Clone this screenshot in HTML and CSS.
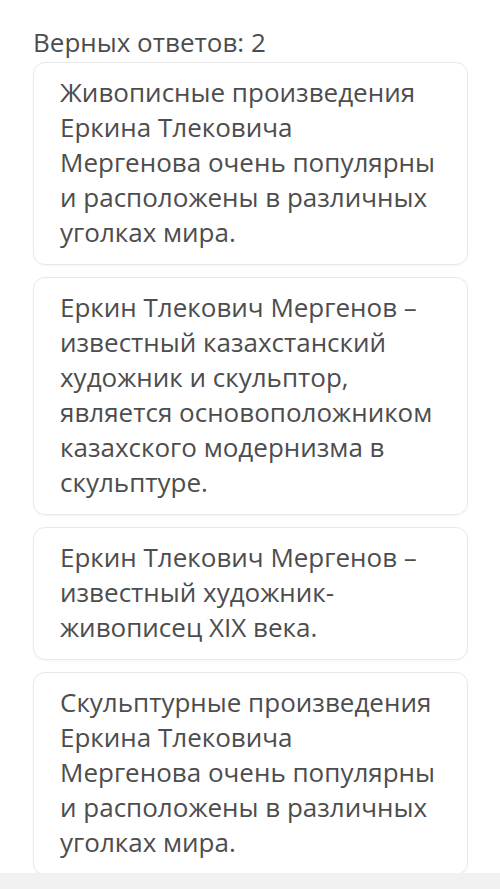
FILE: index.html
```html
<!DOCTYPE html>
<html lang="ru">
<head>
  <meta charset="UTF-8">
  <meta name="viewport" content="width=device-width, initial-scale=1.0">
  <title>Верных ответов</title>
  <link rel="stylesheet" href="styles.css">
</head>
<body>
  <div class="quiz">
    <div class="quiz-title">Верных ответов: 2</div>
    <div class="answers">
      <div class="answer">Живописные произведения Еркина Тлековича Мергенова очень популярны и расположены в различных уголках мира.</div>
      <div class="answer">Еркин Тлекович Мергенов – известный казахстанский художник и скульптор, является основоположником казахского модернизма в скульптуре.</div>
      <div class="answer">Еркин Тлекович Мергенов – известный художник-живописец XIX века.</div>
      <div class="answer">Скульптурные произведения Еркина Тлековича Мергенова очень популярны и расположены в различных уголках мира.</div>
    </div>
  </div>
  <div class="bottom-bar"></div>
</body>
</html>
```

FILE: styles.css
```css
body {
  margin: 0;
  padding: 0;
  background-color: #fff;
  font-family: 'Open Sans', 'Noto Sans', sans-serif;
  color: #4d4d4d;
}

.quiz {
  padding: 25px 32px 0 33px;
}

.quiz-title {
  font-size: 26px;
  line-height: 35px;
  margin-bottom: 2px;
}

.answers {
  display: flex;
  flex-direction: column;
  gap: 12px;
}

.answer {
  border: 1px solid #e8e8e8;
  border-radius: 12px;
  padding: 12px 31px 14px 26px;
  font-size: 26px;
  line-height: 35px;
  box-shadow: 0 1px 2px rgba(0, 0, 0, 0.04);
}

.bottom-bar {
  position: fixed;
  left: 0;
  right: 0;
  bottom: 0;
  height: 16px;
  background-color: #f1f1f1;
}
```
